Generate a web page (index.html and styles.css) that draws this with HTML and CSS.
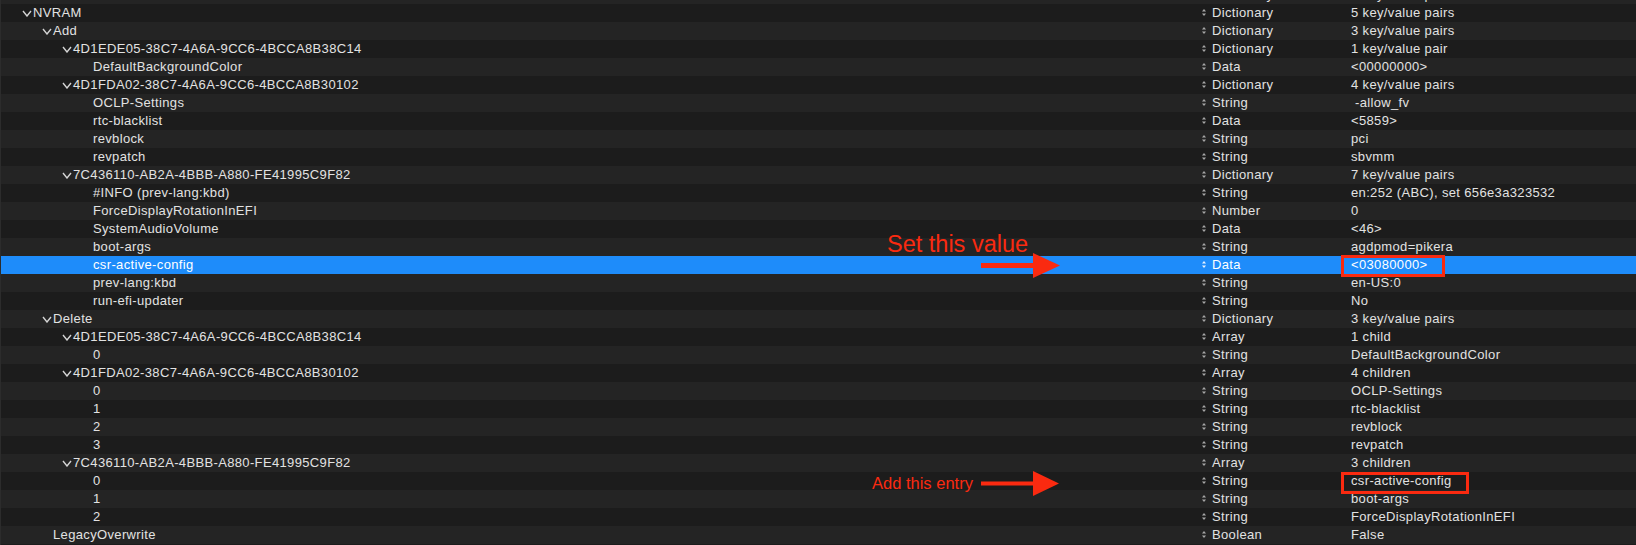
FILE: index.html
```html
<!DOCTYPE html>
<html>
<head>
<meta charset="utf-8">
<link rel="stylesheet" href="styles.css">
</head>
<body>
<div class="outline">
  <div class="rows">
    <div class="row odd part"><div class="key l0"><span class="chev"><svg width="10" height="7" viewBox="0 0 10 7"><polyline points="1,1 5,6 9,1"/></svg></span>Misc</div><div class="type"><svg class="ud" width="4" height="7" viewBox="0 0 4 7"><polygon points="2,0 4,2.6 0,2.6"/><polygon points="0,4.4 4,4.4 2,7"/></svg>Dictionary</div><div class="val">6 key/value pairs</div></div>
  </div>
  <div class="rows" id="rows"></div>
  <div class="note note1">Set this value</div>
  <svg class="arrow arrow1" width="80" height="26" viewBox="0 0 80 26"><rect x="0" y="10" width="54" height="5"/><polygon points="52,0 79,12.5 52,25"/></svg>
  <div class="note note2">Add this entry</div>
  <svg class="arrow arrow2" width="80" height="26" viewBox="0 0 80 26"><rect x="0" y="10.5" width="54" height="4"/><polygon points="52,0 78,12.5 52,25"/></svg>
  <div class="box box1"></div>
  <div class="box box2"></div>
</div>
<script src="app.js"></script>
</body>
</html>
```
FILE: app.js
```js
const data = [
  [0,1,"NVRAM","Dictionary","5 key/value pairs"],
  [1,1,"Add","Dictionary","3 key/value pairs"],
  [2,1,"4D1EDE05-38C7-4A6A-9CC6-4BCCA8B38C14","Dictionary","1 key/value pair"],
  [3,0,"DefaultBackgroundColor","Data","<00000000>"],
  [2,1,"4D1FDA02-38C7-4A6A-9CC6-4BCCA8B30102","Dictionary","4 key/value pairs"],
  [3,0,"OCLP-Settings","String"," -allow_fv"],
  [3,0,"rtc-blacklist","Data","<5859>"],
  [3,0,"revblock","String","pci"],
  [3,0,"revpatch","String","sbvmm"],
  [2,1,"7C436110-AB2A-4BBB-A880-FE41995C9F82","Dictionary","7 key/value pairs"],
  [3,0,"#INFO (prev-lang:kbd)","String","en:252 (ABC), set 656e3a323532"],
  [3,0,"ForceDisplayRotationInEFI","Number","0"],
  [3,0,"SystemAudioVolume","Data","<46>"],
  [3,0,"boot-args","String","agdpmod=pikera"],
  [3,0,"csr-active-config","Data","<03080000>"],
  [3,0,"prev-lang:kbd","String","en-US:0"],
  [3,0,"run-efi-updater","String","No"],
  [1,1,"Delete","Dictionary","3 key/value pairs"],
  [2,1,"4D1EDE05-38C7-4A6A-9CC6-4BCCA8B38C14","Array","1 child"],
  [3,0,"0","String","DefaultBackgroundColor"],
  [2,1,"4D1FDA02-38C7-4A6A-9CC6-4BCCA8B30102","Array","4 children"],
  [3,0,"0","String","OCLP-Settings"],
  [3,0,"1","String","rtc-blacklist"],
  [3,0,"2","String","revblock"],
  [3,0,"3","String","revpatch"],
  [2,1,"7C436110-AB2A-4BBB-A880-FE41995C9F82","Array","3 children"],
  [3,0,"0","String","csr-active-config"],
  [3,0,"1","String","boot-args"],
  [3,0,"2","String","ForceDisplayRotationInEFI"],
  [1,0,"LegacyOverwrite","Boolean","False"]
];
const chev = '<svg width="10" height="7" viewBox="0 0 10 7"><polyline points="1,1 5,6 9,1"/></svg>';
const ud = '<svg class="ud" width="4" height="7" viewBox="0 0 4 7"><polygon points="2,0 4,2.6 0,2.6"/><polygon points="0,4.4 4,4.4 2,7"/></svg>';
const esc = s => s.replace(/&/g,"&amp;").replace(/</g,"&lt;").replace(/>/g,"&gt;");
const root = document.getElementById("rows");
root.innerHTML = data.map((r, i) => {
  const cls = ["row", i % 2 ? "odd" : "even"];
  if (i === 14) cls.push("sel");
  return `<div class="${cls.join(" ")}"><div class="key l${r[0]}"><span class="chev">${r[1] ? chev : ""}</span>${esc(r[2])}</div><div class="type">${ud}${r[3]}</div><div class="val">${esc(r[4])}</div></div>`;
}).join("");
```
FILE: styles.css
```css
html, body {
  margin: 0;
  padding: 0;
  background: #1c1c1c;
  width: 1636px;
  height: 545px;
  overflow: hidden;
}
body {
  font-family: "Liberation Sans", Arial, sans-serif;
  font-size: 13px;
  letter-spacing: 0.35px;
  color: #e2e2e2;
}
.outline {
  position: relative;
  display: flow-root;
  width: 1636px;
  height: 545px;
  border-left: 1px solid #2c2c2c;
  box-sizing: border-box;
}
.rows .part {
  margin-top: -14px;
}
.row {
  display: grid;
  grid-template-columns: 1198px 145px 1fr;
  height: 18px;
  line-height: 18px;
  white-space: pre;
}
.row.even { background: #1c1c1c; }
.row.odd { background: #242424; }
.row.sel { background: #1e8cfa; color: #ffffff; }
.key {
  display: flex;
  align-items: center;
}
.l0 { padding-left: 21px; }
.l1 { padding-left: 41px; }
.l2 { padding-left: 61px; }
.l3 { padding-left: 81px; }
.chev {
  width: 11px;
  height: 18px;
  display: flex;
  align-items: center;
  flex: none;
}
.chev svg polyline {
  fill: none;
  stroke: #d4d4d4;
  stroke-width: 1.4;
}
.type {
  display: flex;
  align-items: center;
  padding-left: 3px;
}
.ud {
  fill: #a8a8a8;
  margin-right: 6px;
  margin-top: -1px;
  flex: none;
}
.sel .ud { fill: #e8f2ff; }
.val {
  padding-left: 7px;
}
.note {
  position: absolute;
  color: #fa2a10;
  white-space: nowrap;
  letter-spacing: 0;
}
.note1 {
  left: 886px;
  top: 232px;
  font-size: 23.5px;
  line-height: 24px;
}
.note2 {
  left: 871px;
  top: 475px;
  font-size: 16.5px;
  line-height: 17px;
}
.arrow {
  position: absolute;
  fill: #fa2a10;
}
.arrow1 { left: 980px; top: 253px; }
.arrow2 { left: 980px; top: 471px; }
.box {
  position: absolute;
  border: 3px solid #fa2a10;
  box-sizing: border-box;
}
.box1 { left: 1340px; top: 255px; width: 104px; height: 22px; }
.box2 { left: 1340px; top: 472px; width: 128px; height: 22px; }
```
